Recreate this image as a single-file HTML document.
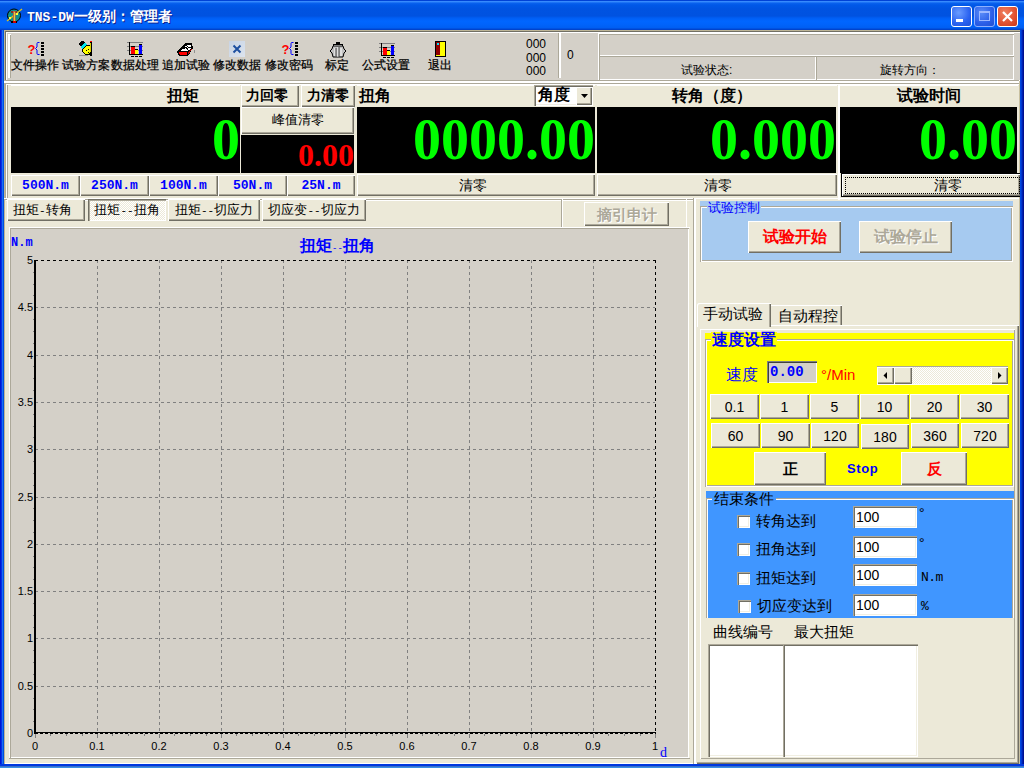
<!DOCTYPE html><html><head><meta charset="utf-8"><style>
*{box-sizing:border-box;margin:0;padding:0}
html,body{width:1024px;height:768px;overflow:hidden;background:#0055e5;font-family:"Liberation Sans",sans-serif;font-size:12px;color:#000}
div,span{position:absolute;white-space:nowrap}
.title{left:0;top:0;width:1024px;height:30px;background:linear-gradient(to bottom,#0042d6 0px,#0042d6 1px,#3d90ff 1px,#2f84fb 2px,#0a62ee 3px,#0058e8 5px,#0053e1 9px,#0052e0 16px,#005ef4 18px,#0066ff 21px,#0064fc 24px,#005ef2 28px,#0046d0 29px,#0040c8 30px)}
.btn{background:#ece9d8;box-shadow:inset 1px 1px 0 #fff,inset -1px -1px 0 #716f64,inset -2px -2px 0 #aca899;text-align:center}
.sunk{box-shadow:inset 1px 1px 0 #aca899,inset 2px 2px 0 #716f64,inset -1px -1px 0 #fff,inset -2px -2px 0 #f1efe2}
.sunk1{box-shadow:inset 1px 1px 0 #aca899,inset -1px -1px 0 #fff}
.rais1{box-shadow:inset 1px 1px 0 #fff,inset -1px -1px 0 #aca899}
.blk{background:#000}
.hdr{background:#ece9d8;box-shadow:inset 0 1px 0 #fff}
.dig{font-family:"Liberation Serif",serif;font-weight:bold;color:#00ff00;text-align:right;font-size:56px;transform:scaleY(1.07);transform-origin:50% 100%}
.cn{font-size:12px}
.hb{font-size:16px;font-weight:bold;line-height:16px}
</style></head><body>
<div class="title"></div>
<div style="left:27px;top:10px;color:#fff;font-weight:bold;font-size:13px;line-height:14px;font-family:Liberation Mono;text-shadow:1px 1px 0 #0a1e8c">TNS-DW<span style="position:static;font-size:14px">一级别：管理者</span></div>
<div style="left:4px;top:30px;width:1016px;height:734px;background:#ece9d8;box-shadow:inset 1px 1px 0 #bdb596,inset -1px 0 0 #c8c0a0,inset 0 -1px 0 #fff"></div>
<div style="left:5px;top:31px;width:1015px;height:50px;background:#d4d0c8;box-shadow:inset 1px 1px 0 #716f64,inset 2px 2px 0 #fff,inset -1px 0 0 #fff,inset -2px 0 0 #aca899"></div>
<div style="left:5px;top:80px;width:1014px;height:1px;background:#aca899"></div>
<div style="left:4px;top:81px;width:1015px;height:2px;background:#fff"></div>
<div style="left:5px;top:83px;width:1014px;height:1px;background:#aca899"></div>
<div style="left:5px;top:83px;width:1px;height:115px;background:#aca899"></div>
<div style="left:6px;top:84px;width:1013px;height:1px;background:#fff"></div>
<div style="left:6px;top:84px;width:1px;height:114px;background:#fff"></div>
<div style="left:7px;top:85px;width:1px;height:113px;background:#aca899"></div>
<div style="left:4px;top:198px;width:1015px;height:1px;background:#fff"></div>
<div style="left:5px;top:199px;width:688px;height:1px;background:#aca899"></div>
<div style="left:6px;top:200px;width:687px;height:1px;background:#fff"></div>
<div style="left:9px;top:227px;width:681px;height:1px;background:#fff"></div>
<div style="left:9px;top:227px;width:1px;height:532px;background:#fff"></div>
<div style="left:9px;top:758px;width:681px;height:1px;background:#aca899"></div>
<div style="left:0;top:30px;width:4px;height:734px;background:linear-gradient(to right,#0018d0 0,#0018d0 1px,#0830e8 1px,#0830e8 2px,#1a70f0 2px,#1a70f0 3px,#0050e0 3px)"></div>
<div style="left:1020px;top:30px;width:4px;height:734px;background:linear-gradient(to right,#0048e0 0,#0048e0 1px,#0038d0 1px,#0038d0 2px,#0020b0 2px,#0020b0 3px,#001090 3px)"></div>
<div style="left:0;top:764px;width:1024px;height:4px;background:linear-gradient(to bottom,#0038e0 0,#0038e0 2px,#3a70c8 2px,#3a70c8 3px,#3890e8 3px)"></div>
<div style="left:8px;top:34px;width:3px;height:44px;box-shadow:inset 2px 1px 0 #fff,inset -1px -1px 0 #aca899"></div>
<div class="cn" style="left:11px;top:58px;line-height:14px;-webkit-text-stroke:0.25px #000">文件操作</div>
<div class="cn" style="left:62px;top:58px;line-height:14px;-webkit-text-stroke:0.25px #000">试验方案</div>
<div class="cn" style="left:111px;top:58px;line-height:14px;-webkit-text-stroke:0.25px #000">数据处理</div>
<div class="cn" style="left:162px;top:58px;line-height:14px;-webkit-text-stroke:0.25px #000">追加试验</div>
<div class="cn" style="left:213px;top:58px;line-height:14px;-webkit-text-stroke:0.25px #000">修改数据</div>
<div class="cn" style="left:265px;top:58px;line-height:14px;-webkit-text-stroke:0.25px #000">修改密码</div>
<div class="cn" style="left:325px;top:58px;line-height:14px;-webkit-text-stroke:0.25px #000">标定</div>
<div class="cn" style="left:362px;top:58px;line-height:14px;-webkit-text-stroke:0.25px #000">公式设置</div>
<div class="cn" style="left:428px;top:58px;line-height:14px;-webkit-text-stroke:0.25px #000">退出</div>
<div style="left:27px;top:41px;width:20px;height:16px"><svg width="20" height="16"><text x="0.5" y="13" font-family="Liberation Sans" font-weight="bold" font-size="13" fill="#ff0000">?</text><path d="M12.5 1.5 h-1.5 q-1 0 -1 1 v3.5 l-1.5 1.5 l1.5 1.5 v3.5 q0 1 1 1 h1.5" stroke="#0000ff" stroke-width="1" fill="none"/><g shape-rendering="crispEdges"><rect x="14" y="1" width="3" height="2" fill="#000"/><rect x="14" y="4" width="3" height="2" fill="#000"/><rect x="14" y="7" width="3" height="2" fill="#000"/><rect x="14" y="10" width="3" height="2" fill="#000"/><rect x="14" y="13" width="3" height="2" fill="#000"/></g></svg></div>
<div style="left:281px;top:41px;width:20px;height:16px"><svg width="20" height="16"><text x="0.5" y="13" font-family="Liberation Sans" font-weight="bold" font-size="13" fill="#ff0000">?</text><path d="M12.5 1.5 h-1.5 q-1 0 -1 1 v3.5 l-1.5 1.5 l1.5 1.5 v3.5 q0 1 1 1 h1.5" stroke="#0000ff" stroke-width="1" fill="none"/><g shape-rendering="crispEdges"><rect x="14" y="1" width="3" height="2" fill="#000"/><rect x="14" y="4" width="3" height="2" fill="#000"/><rect x="14" y="7" width="3" height="2" fill="#000"/><rect x="14" y="10" width="3" height="2" fill="#000"/><rect x="14" y="13" width="3" height="2" fill="#000"/></g></svg></div>
<div style="left:77px;top:40px;width:17px;height:17px"><svg width="17" height="17" shape-rendering="crispEdges"><path d="M2 3 L4 1 L6 1 L9 4 L5 8 L2 5 z" fill="#000"/><path d="M3 7 L8 3 L10 5 L5 9 z" fill="#00e8f0"/><path d="M6 9 L10 5 L14 5 L14 12 L12 15 L8 14 L5 11 z" fill="#ffff00" stroke="#000" stroke-width="1"/><rect x="9" y="10" width="1" height="1" fill="#000"/><rect x="11" y="9" width="1" height="1" fill="#000"/><rect x="11" y="12" width="1" height="1" fill="#000"/><rect x="13" y="1" width="2" height="1" fill="#f00"/><rect x="13" y="2" width="2" height="14" fill="#000"/><rect x="13" y="3" width="1" height="9" fill="#d8d000"/><rect x="2" y="15" width="9" height="1" fill="#909090"/></svg></div>
<div style="left:127px;top:42px;width:17px;height:16px"><svg width="17" height="16"><rect x="0" y="0" width="16" height="1" fill="#808080"/><rect x="0" y="4" width="16" height="1" fill="#808080"/><rect x="0" y="8" width="16" height="1" fill="#808080"/><rect x="2" y="0" width="1" height="13" fill="#000"/><rect x="2" y="12" width="14" height="1" fill="#000"/><rect x="4" y="4" width="4" height="8" fill="#f00"/><rect x="4" y="4" width="4" height="1" fill="#000"/><rect x="8" y="7" width="3" height="5" fill="#ff0"/><rect x="8" y="7" width="3" height="1" fill="#000"/><rect x="12" y="2" width="3" height="10" fill="#00f"/><rect x="12" y="2" width="3" height="1" fill="#000"/><rect x="4" y="14" width="3" height="1" fill="#000"/><rect x="8" y="14" width="3" height="1" fill="#000"/><rect x="12" y="14" width="3" height="1" fill="#000"/></svg></div>
<div style="left:379px;top:43px;width:17px;height:16px"><svg width="17" height="16"><rect x="0" y="0" width="16" height="1" fill="#808080"/><rect x="0" y="4" width="16" height="1" fill="#808080"/><rect x="0" y="8" width="16" height="1" fill="#808080"/><rect x="2" y="0" width="1" height="13" fill="#000"/><rect x="2" y="12" width="14" height="1" fill="#000"/><rect x="4" y="4" width="4" height="8" fill="#f00"/><rect x="4" y="4" width="4" height="1" fill="#000"/><rect x="8" y="7" width="3" height="5" fill="#ff0"/><rect x="8" y="7" width="3" height="1" fill="#000"/><rect x="12" y="2" width="3" height="10" fill="#00f"/><rect x="12" y="2" width="3" height="1" fill="#000"/><rect x="4" y="14" width="3" height="1" fill="#000"/><rect x="8" y="14" width="3" height="1" fill="#000"/><rect x="12" y="14" width="3" height="1" fill="#000"/></svg></div>
<div style="left:176px;top:42px;width:19px;height:16px"><svg width="19" height="16" shape-rendering="crispEdges"><path d="M1 10 L9 1 L16 1 L17 6 L12 14 L3 14 Z" fill="#000"/><path d="M5 9 L9 4 L10 5 L11 3 L15 3 L15 7 L11 9 Z" fill="#fff"/><path d="M7 7 L10 5 L12 8 M10 3 L12 5 L15 5" stroke="#000" stroke-width="1" fill="none"/><path d="M3 10 H11 V13 H4 Z" fill="#ff0000"/><path d="M12 11 L16 6 L16 7.5 L12 12.5 Z" fill="#c00000"/><rect x="18" y="8" width="1" height="3" fill="#909090"/></svg></div>
<div style="left:229px;top:41px;width:16px;height:16px;background:linear-gradient(135deg,#c8d4e4,#dce4ee)"><svg width="16" height="16"><path d="M4.5 4.5 L11.5 11.5 M11.5 4.5 L4.5 11.5" stroke="#1e50a0" stroke-width="2"/></svg></div>
<div style="left:329px;top:42px;width:18px;height:16px"><svg width="18" height="16"><rect x="7" y="0" width="4" height="2" fill="#000"/><rect x="4" y="2" width="10" height="2" fill="#000"/><rect x="5" y="3" width="8" height="1" fill="#fff"/><path d="M4 4 h10 l1 3 l2 2 l-2 2 l-1 4 h-10 l-1-4 l-2-2 l2-2 z" fill="#c0c0c0" stroke="#000" stroke-width="1"/><path d="M6 6 v8 M9 5 v10 M12 6 v8" stroke="#fff" stroke-width="1"/><path d="M7 6 v8 M10 5 v10" stroke="#404040" stroke-width="1"/></svg></div>
<div style="left:435px;top:41px;width:11px;height:16px;background:#000"><div style="left:1px;top:1px;width:9px;height:14px;background:#ffff00"></div><div style="left:1px;top:1px;width:4px;height:13px;background:#900000"></div><div style="left:2px;top:2px;width:2px;height:2px;background:#00e0ff"></div></div>
<div class="cn" style="left:526px;top:38px;line-height:13px;font-size:12px">000</div>
<div class="cn" style="left:526px;top:52px;line-height:13px;font-size:12px">000</div>
<div class="cn" style="left:526px;top:65px;line-height:13px;font-size:12px">000</div>
<div style="left:558px;top:33px;width:3px;height:45px;box-shadow:inset 1px 0 0 #aca899,inset -2px 0 0 #fff"></div>
<div class="cn" style="left:567px;top:49px;line-height:13px">0</div>
<div style="left:598px;top:33px;width:416px;height:47px;box-shadow:inset 1px 1px 0 #fff"></div>
<div class="sunk1" style="left:599px;top:34px;width:415px;height:22px"></div>
<div class="sunk1" style="left:599px;top:56px;width:217px;height:24px"></div>
<div class="sunk1" style="left:816px;top:56px;width:198px;height:24px"></div>
<div class="cn" style="left:681px;top:62px">试验状态:</div>
<div class="cn" style="left:880px;top:62px">旋转方向：</div>
<div style="left:1015px;top:33px;width:5px;height:47px;background:#d4d0c8"></div>
<div class="hdr" style="left:11px;top:85px;width:229px;height:22px"></div>
<div class="hb" style="left:167px;top:88px">扭矩</div>
<div class="btn hb" style="left:241px;top:85px;width:58px;height:22px;line-height:21px;font-size:14px;padding-right:6px">力回零</div>
<div class="btn hb" style="left:301px;top:85px;width:54px;height:22px;line-height:21px;font-size:14px">力清零</div>
<div class="blk" style="left:11px;top:107px;width:229px;height:66px"></div>
<div class="dig" style="left:11px;top:108px;width:229px;line-height:66px;font-size:56px;">0</div>
<div class="btn" style="left:241px;top:107px;width:113px;height:27px;line-height:26px;font-size:13px">峰值清零</div>
<div class="blk" style="left:241px;top:135px;width:113px;height:38px"></div>
<div class="dig" style="left:241px;top:136px;width:113px;line-height:38px;font-size:32px;color:#ff0000;transform:none;">0.00</div>
<div class="btn" style="left:11px;top:175px;width:69px;height:21px;color:#0000ff;font-weight:bold;line-height:22px;font-family:Liberation Mono;font-size:13px">500N.m</div>
<div class="btn" style="left:80px;top:175px;width:69px;height:21px;color:#0000ff;font-weight:bold;line-height:22px;font-family:Liberation Mono;font-size:13px">250N.m</div>
<div class="btn" style="left:149px;top:175px;width:69px;height:21px;color:#0000ff;font-weight:bold;line-height:22px;font-family:Liberation Mono;font-size:13px">100N.m</div>
<div class="btn" style="left:218px;top:175px;width:69px;height:21px;color:#0000ff;font-weight:bold;line-height:22px;font-family:Liberation Mono;font-size:13px">50N.m</div>
<div class="btn" style="left:287px;top:175px;width:68px;height:21px;color:#0000ff;font-weight:bold;line-height:22px;font-family:Liberation Mono;font-size:13px">25N.m</div>
<div class="hdr" style="left:357px;top:85px;width:238px;height:22px"></div>
<div class="hb" style="left:359px;top:88px">扭角</div>
<div class="sunk" style="left:534px;top:85px;width:59px;height:21px;background:#fff"></div>
<div class="hb" style="left:538px;top:87px">角度</div>
<div class="btn" style="left:576px;top:87px;width:16px;height:18px"><svg style="position:absolute;left:5px;top:7px" width="8" height="5"><path d="M0 0 h7 l-3.5 4z" fill="#000"/></svg></div>
<div class="blk" style="left:357px;top:107px;width:238px;height:66px"></div>
<div class="dig" style="left:357px;top:108px;width:238px;line-height:66px;font-size:56px;">0000.00</div>
<div class="btn" style="left:357px;top:174px;width:238px;height:22px;line-height:22px;font-size:14px;padding-right:7px">清零</div>
<div class="hdr" style="left:597px;top:85px;width:240px;height:22px"></div>
<div class="hb" style="left:672px;top:88px">转角（度）</div>
<div class="blk" style="left:597px;top:107px;width:239px;height:66px"></div>
<div class="dig" style="left:597px;top:108px;width:239px;line-height:66px;font-size:56px;">0.000</div>
<div class="btn" style="left:597px;top:174px;width:240px;height:22px;line-height:22px;font-size:14px;padding-left:2px">清零</div>
<div style="left:838px;top:85px;width:2px;height:115px;background:#fff"></div>
<div class="hdr" style="left:840px;top:85px;width:178px;height:22px"></div>
<div class="hb" style="left:897px;top:88px">试验时间</div>
<div class="blk" style="left:840px;top:107px;width:177px;height:66px"></div>
<div class="dig" style="left:840px;top:108px;width:177px;line-height:66px;font-size:56px;">0.00</div>
<div style="left:841px;top:173px;width:179px;height:24px;background:#000"></div>
<div class="btn" style="left:842px;top:174px;width:178px;height:22px;line-height:22px;font-size:14px;padding-left:34px">清零</div>
<div style="left:845px;top:177px;width:175px;height:17px;border:1px dotted #000"></div>
<div class="btn" style="left:7px;top:199px;width:78px;height:22px;line-height:22px;font-size:13px;text-align:left;padding-left:6px;">扭矩<span style="position:static;font-family:Liberation Mono;font-size:11px">-</span>转角</div>
<div class="btn" style="left:168px;top:199px;width:92px;height:22px;line-height:22px;font-size:13px;">扭矩<span style="position:static;font-family:Liberation Mono;font-size:11px">--</span>切应力</div>
<div class="btn" style="left:262px;top:199px;width:104px;height:22px;line-height:22px;font-size:13px;">切应变<span style="position:static;font-family:Liberation Mono;font-size:11px">--</span>切应力</div>
<div style="left:88px;top:199px;width:78px;height:22px;line-height:22px;font-size:13px;text-align:center;background:repeating-conic-gradient(#fff 0 25%,#ece9d8 0 50%) 0 0/2px 2px;box-shadow:inset 1px 1px 0 #716f64,inset 2px 2px 0 #aca899,inset -1px -1px 0 #fff">扭矩<span style="position:static;font-family:Liberation Mono;font-size:11px">--</span>扭角</div>
<div style="left:561px;top:199px;width:2px;height:28px;box-shadow:inset 1px 0 0 #aca899,inset -1px 0 0 #fff"></div>
<div class="btn" style="left:584px;top:202px;width:85px;height:24px;line-height:25px;color:#aca899;font-weight:bold;font-size:15px;text-shadow:1px 1px 0 #fff">摘引申计</div>
<div style="left:686px;top:199px;width:1px;height:29px;background:#fff"></div>
<div style="left:10px;top:228px;width:679px;height:530px;background:#d4d0c8;box-shadow:inset 1px 1px 0 #aca899,inset -1px -1px 0 #fff"></div>
<div style="left:705px;top:333px;width:309px;height:154px;background:#ffff00"></div>
<div style="left:706px;top:491px;width:308px;height:127px;background:#4096ff"></div>
<div style="left:6px;top:7px;width:18px;height:18px"><svg width="18" height="18"><circle cx="8" cy="8.5" r="6.5" fill="#10908c" stroke="#000" stroke-width="1"/><path d="M1 14 L16 2" stroke="#d8c020" stroke-width="1.5"/><rect x="5" y="4" width="6" height="2" fill="#8a3020"/><rect x="7" y="4" width="2.5" height="10" fill="#c06040"/><rect x="8" y="5" width="1" height="9" fill="#e0d040"/><rect x="5" y="14" width="6" height="2" fill="#000"/><rect x="7" y="14" width="3" height="2" fill="#d00000"/><rect x="3" y="10" width="2" height="2" fill="#ffff40"/><rect x="10" y="6" width="2" height="2" fill="#ffff40"/></svg></div>
<div style="left:951px;top:6px;width:21px;height:21px;border-radius:3px;border:1px solid #fff;background:radial-gradient(circle at 35% 30%,#6a9cff,#2a62f0 60%,#1c50d8)"><div style="left:4px;top:12px;width:7px;height:3px;background:#fff"></div></div>
<div style="left:974px;top:6px;width:21px;height:21px;border-radius:3px;border:1px solid #8cb0ff;background:radial-gradient(circle at 35% 30%,#5a8cf8,#2a5ee8 60%,#2050d0)"><div style="left:4px;top:4px;width:11px;height:10px;border:1px solid #9cb8ff;border-top-width:2px"></div></div>
<div style="left:997px;top:6px;width:21px;height:21px;border-radius:3px;border:1px solid #fff;background:radial-gradient(circle at 35% 30%,#f08060,#e05030 60%,#c83818)"><svg style="position:absolute;left:3px;top:3px" width="13" height="13"><path d="M2 2 L11 11 M11 2 L2 11" stroke="#fff" stroke-width="2.2"/></svg></div>
<div style="left:0;top:0;width:1024px;height:768px"><svg width="1024" height="768" shape-rendering="crispEdges"><line x1="97.5" y1="260" x2="97.5" y2="738" stroke="#808080" stroke-dasharray="3 3"/><line x1="159.5" y1="260" x2="159.5" y2="738" stroke="#808080" stroke-dasharray="3 3"/><line x1="221.5" y1="260" x2="221.5" y2="738" stroke="#808080" stroke-dasharray="3 3"/><line x1="283.5" y1="260" x2="283.5" y2="738" stroke="#808080" stroke-dasharray="3 3"/><line x1="345.5" y1="260" x2="345.5" y2="738" stroke="#808080" stroke-dasharray="3 3"/><line x1="407.5" y1="260" x2="407.5" y2="738" stroke="#808080" stroke-dasharray="3 3"/><line x1="469.5" y1="260" x2="469.5" y2="738" stroke="#808080" stroke-dasharray="3 3"/><line x1="531.5" y1="260" x2="531.5" y2="738" stroke="#808080" stroke-dasharray="3 3"/><line x1="593.5" y1="260" x2="593.5" y2="738" stroke="#808080" stroke-dasharray="3 3"/><line x1="35" y1="307.5" x2="655" y2="307.5" stroke="#808080" stroke-dasharray="3 3"/><line x1="35" y1="355.5" x2="655" y2="355.5" stroke="#808080" stroke-dasharray="3 3"/><line x1="35" y1="402.5" x2="655" y2="402.5" stroke="#808080" stroke-dasharray="3 3"/><line x1="35" y1="449.5" x2="655" y2="449.5" stroke="#808080" stroke-dasharray="3 3"/><line x1="35" y1="497.5" x2="655" y2="497.5" stroke="#808080" stroke-dasharray="3 3"/><line x1="35" y1="544.5" x2="655" y2="544.5" stroke="#808080" stroke-dasharray="3 3"/><line x1="35" y1="591.5" x2="655" y2="591.5" stroke="#808080" stroke-dasharray="3 3"/><line x1="35" y1="638.5" x2="655" y2="638.5" stroke="#808080" stroke-dasharray="3 3"/><line x1="35" y1="686.5" x2="655" y2="686.5" stroke="#808080" stroke-dasharray="3 3"/><line x1="35" y1="260.5" x2="656" y2="260.5" stroke="#000" stroke-dasharray="3 3"/><line x1="655.5" y1="260" x2="655.5" y2="738" stroke="#000" stroke-dasharray="3 3"/><rect x="34" y="260" width="2" height="474" fill="#000"/><rect x="34" y="732" width="622" height="1" fill="#000"/><line x1="35" y1="733.5" x2="656" y2="733.5" stroke="#000" stroke-dasharray="3 2"/><rect x="50" y="734" width="1" height="2" fill="#808080"/><rect x="66" y="734" width="1" height="2" fill="#808080"/><rect x="82" y="734" width="1" height="2" fill="#808080"/><rect x="112" y="734" width="1" height="2" fill="#808080"/><rect x="128" y="734" width="1" height="2" fill="#808080"/><rect x="144" y="734" width="1" height="2" fill="#808080"/><rect x="174" y="734" width="1" height="2" fill="#808080"/><rect x="190" y="734" width="1" height="2" fill="#808080"/><rect x="206" y="734" width="1" height="2" fill="#808080"/><rect x="236" y="734" width="1" height="2" fill="#808080"/><rect x="252" y="734" width="1" height="2" fill="#808080"/><rect x="268" y="734" width="1" height="2" fill="#808080"/><rect x="298" y="734" width="1" height="2" fill="#808080"/><rect x="314" y="734" width="1" height="2" fill="#808080"/><rect x="330" y="734" width="1" height="2" fill="#808080"/><rect x="360" y="734" width="1" height="2" fill="#808080"/><rect x="376" y="734" width="1" height="2" fill="#808080"/><rect x="392" y="734" width="1" height="2" fill="#808080"/><rect x="422" y="734" width="1" height="2" fill="#808080"/><rect x="438" y="734" width="1" height="2" fill="#808080"/><rect x="454" y="734" width="1" height="2" fill="#808080"/><rect x="484" y="734" width="1" height="2" fill="#808080"/><rect x="500" y="734" width="1" height="2" fill="#808080"/><rect x="516" y="734" width="1" height="2" fill="#808080"/><rect x="546" y="734" width="1" height="2" fill="#808080"/><rect x="562" y="734" width="1" height="2" fill="#808080"/><rect x="578" y="734" width="1" height="2" fill="#808080"/><rect x="608" y="734" width="1" height="2" fill="#808080"/><rect x="624" y="734" width="1" height="2" fill="#808080"/><rect x="640" y="734" width="1" height="2" fill="#808080"/><rect x="35" y="734" width="1" height="4" fill="#808080"/><rect x="97" y="734" width="1" height="4" fill="#808080"/><rect x="159" y="734" width="1" height="4" fill="#808080"/><rect x="221" y="734" width="1" height="4" fill="#808080"/><rect x="283" y="734" width="1" height="4" fill="#808080"/><rect x="345" y="734" width="1" height="4" fill="#808080"/><rect x="407" y="734" width="1" height="4" fill="#808080"/><rect x="469" y="734" width="1" height="4" fill="#808080"/><rect x="531" y="734" width="1" height="4" fill="#808080"/><rect x="593" y="734" width="1" height="4" fill="#808080"/><rect x="655" y="734" width="1" height="4" fill="#808080"/><rect x="33" y="272" width="1" height="1" fill="#808080"/><rect x="33" y="284" width="1" height="1" fill="#808080"/><rect x="33" y="295" width="1" height="1" fill="#808080"/><rect x="33" y="319" width="1" height="1" fill="#808080"/><rect x="33" y="331" width="1" height="1" fill="#808080"/><rect x="33" y="343" width="1" height="1" fill="#808080"/><rect x="33" y="366" width="1" height="1" fill="#808080"/><rect x="33" y="378" width="1" height="1" fill="#808080"/><rect x="33" y="390" width="1" height="1" fill="#808080"/><rect x="33" y="414" width="1" height="1" fill="#808080"/><rect x="33" y="426" width="1" height="1" fill="#808080"/><rect x="33" y="437" width="1" height="1" fill="#808080"/><rect x="33" y="461" width="1" height="1" fill="#808080"/><rect x="33" y="473" width="1" height="1" fill="#808080"/><rect x="33" y="485" width="1" height="1" fill="#808080"/><rect x="33" y="508" width="1" height="1" fill="#808080"/><rect x="33" y="520" width="1" height="1" fill="#808080"/><rect x="33" y="532" width="1" height="1" fill="#808080"/><rect x="33" y="556" width="1" height="1" fill="#808080"/><rect x="33" y="567" width="1" height="1" fill="#808080"/><rect x="33" y="579" width="1" height="1" fill="#808080"/><rect x="33" y="603" width="1" height="1" fill="#808080"/><rect x="33" y="615" width="1" height="1" fill="#808080"/><rect x="33" y="627" width="1" height="1" fill="#808080"/><rect x="33" y="650" width="1" height="1" fill="#808080"/><rect x="33" y="662" width="1" height="1" fill="#808080"/><rect x="33" y="674" width="1" height="1" fill="#808080"/><rect x="33" y="698" width="1" height="1" fill="#808080"/><rect x="33" y="709" width="1" height="1" fill="#808080"/><rect x="33" y="721" width="1" height="1" fill="#808080"/></svg></div>
<div style="left:0px;top:254px;width:33px;text-align:right;font-size:11px;line-height:12px">5</div>
<div style="left:0px;top:301px;width:33px;text-align:right;font-size:11px;line-height:12px">4.5</div>
<div style="left:0px;top:349px;width:33px;text-align:right;font-size:11px;line-height:12px">4</div>
<div style="left:0px;top:396px;width:33px;text-align:right;font-size:11px;line-height:12px">3.5</div>
<div style="left:0px;top:443px;width:33px;text-align:right;font-size:11px;line-height:12px">3</div>
<div style="left:0px;top:491px;width:33px;text-align:right;font-size:11px;line-height:12px">2.5</div>
<div style="left:0px;top:538px;width:33px;text-align:right;font-size:11px;line-height:12px">2</div>
<div style="left:0px;top:585px;width:33px;text-align:right;font-size:11px;line-height:12px">1.5</div>
<div style="left:0px;top:632px;width:33px;text-align:right;font-size:11px;line-height:12px">1</div>
<div style="left:0px;top:680px;width:33px;text-align:right;font-size:11px;line-height:12px">0.5</div>
<div style="left:0px;top:727px;width:33px;text-align:right;font-size:11px;line-height:12px">0</div>
<div style="left:15px;top:740px;width:40px;text-align:center;font-size:11px;line-height:12px">0</div>
<div style="left:77px;top:740px;width:40px;text-align:center;font-size:11px;line-height:12px">0.1</div>
<div style="left:139px;top:740px;width:40px;text-align:center;font-size:11px;line-height:12px">0.2</div>
<div style="left:201px;top:740px;width:40px;text-align:center;font-size:11px;line-height:12px">0.3</div>
<div style="left:263px;top:740px;width:40px;text-align:center;font-size:11px;line-height:12px">0.4</div>
<div style="left:325px;top:740px;width:40px;text-align:center;font-size:11px;line-height:12px">0.5</div>
<div style="left:387px;top:740px;width:40px;text-align:center;font-size:11px;line-height:12px">0.6</div>
<div style="left:449px;top:740px;width:40px;text-align:center;font-size:11px;line-height:12px">0.7</div>
<div style="left:511px;top:740px;width:40px;text-align:center;font-size:11px;line-height:12px">0.8</div>
<div style="left:573px;top:740px;width:40px;text-align:center;font-size:11px;line-height:12px">0.9</div>
<div style="left:635px;top:740px;width:40px;text-align:center;font-size:11px;line-height:12px">1</div>
<div style="left:11px;top:237px;color:#0000ff;font-family:Liberation Mono;font-weight:bold;font-size:12px;line-height:12px">N.m</div>
<div style="left:660px;top:746px;color:#0000ff;font-family:Liberation Serif;font-size:14px;line-height:14px">d</div>
<div style="left:300px;top:238px;color:#0000ff;font-weight:bold;font-size:16px;line-height:16px">扭矩<span style="position:static;font-family:Liberation Mono;font-size:9px;font-weight:normal">--</span>扭角</div>
<div style="left:693px;top:198px;width:1px;height:566px;background:#aca899"></div>
<div style="left:694px;top:198px;width:2px;height:566px;background:#fff"></div>
<div style="left:700px;top:201px;width:313px;height:61px;background:#a6caf0"></div>
<div style="left:700px;top:206px;width:313px;height:56px;box-shadow:inset 1px 1px 0 #aca899,inset 2px 2px 0 #fff,inset -1px -1px 0 #fff,inset -2px -2px 0 #aca899"></div>
<div style="left:707px;top:201px;height:13px;padding:0 1px;background:#a6caf0;color:#0000ff;font-size:13px;line-height:13px">试验控制</div>
<div class="btn" style="left:748px;top:221px;width:93px;height:32px;line-height:32px;color:#ff0000;font-weight:bold;font-size:16px">试验开始</div>
<div class="btn" style="left:859px;top:221px;width:93px;height:32px;line-height:32px;color:#aca899;font-weight:bold;font-size:16px;text-shadow:1px 1px 0 #fff">试验停止</div>
<div style="left:697px;top:325px;width:322px;height:439px;box-shadow:inset 0 1px 0 #fff,inset -1px -1px 0 #716f64,inset -2px -2px 0 #aca899"></div>
<div style="left:700px;top:329px;width:315px;height:430px;box-shadow:inset 1px 1px 0 #fff,inset -1px -1px 0 #aca899"></div>
<div style="left:697px;top:303px;width:74px;height:24px;background:#ece9d8;box-shadow:inset 1px 1px 0 #fff,inset -1px 0 0 #716f64,inset -2px 0 0 #aca899;border-top-left-radius:2px"></div>
<div style="left:703px;top:305px;font-size:15px;line-height:17px">手动试验</div>
<div style="left:771px;top:305px;width:71px;height:20px;box-shadow:inset 0 1px 0 #fff,inset -1px 0 0 #716f64,inset -2px 0 0 #aca899"></div>
<div style="left:778px;top:307px;font-size:15px;line-height:17px">自动程控</div>
<div style="left:705px;top:339px;width:309px;height:148px;box-shadow:inset 1px 1px 0 #aca899,inset 2px 2px 0 #fff,inset -1px -1px 0 #fff,inset -2px -2px 0 #aca899"></div>
<div style="left:711px;top:332px;padding:0 1px;background:#ffff00;color:#0000ff;font-weight:bold;font-size:16px;line-height:16px">速度设置</div>
<div style="left:726px;top:366px;color:#0000ff;font-size:16px;line-height:17px">速度</div>
<div class="sunk1" style="left:767px;top:361px;width:50px;height:22px;background:#d4d0c8;box-shadow:inset 1px 1px 0 #808080,inset 2px 2px 0 #404040,inset -1px -1px 0 #fff"></div>
<div style="left:770px;top:364px;color:#0000ff;font-family:Liberation Mono;font-weight:bold;font-size:14px;line-height:16px">0.00</div>
<div style="left:821px;top:366px;color:#ff0000;font-size:15px;line-height:17px">°/Min</div>
<div style="left:877px;top:366px;width:131px;height:19px;background:#fff;box-shadow:inset 0 1px 0 #aca899"></div>
<div style="left:877px;top:367px;width:131px;height:17px;background:repeating-conic-gradient(#fff 0 25%,#ece9d8 0 50%) 0 0/2px 2px"></div>
<div class="btn" style="left:877px;top:367px;width:17px;height:17px"><svg style="position:absolute;left:6px;top:5px" width="5" height="8"><path d="M4 0 v7 l-3.5-3.5z" fill="#000"/></svg></div>
<div class="btn" style="left:894px;top:367px;width:18px;height:17px"></div>
<div class="btn" style="left:991px;top:367px;width:17px;height:17px"><svg style="position:absolute;left:7px;top:5px" width="5" height="8"><path d="M0 0 v7 l3.5-3.5z" fill="#000"/></svg></div>
<div class="btn" style="left:710px;top:394px;width:49px;height:25px;line-height:27px;font-size:14px">0.1</div>
<div class="btn" style="left:760px;top:394px;width:49px;height:25px;line-height:27px;font-size:14px">1</div>
<div class="btn" style="left:810px;top:394px;width:49px;height:25px;line-height:27px;font-size:14px">5</div>
<div class="btn" style="left:860px;top:394px;width:49px;height:25px;line-height:27px;font-size:14px">10</div>
<div class="btn" style="left:910px;top:394px;width:49px;height:25px;line-height:27px;font-size:14px">20</div>
<div class="btn" style="left:960px;top:394px;width:49px;height:25px;line-height:27px;font-size:14px">30</div>
<div class="btn" style="left:711px;top:423px;width:49px;height:25px;line-height:27px;font-size:14px">60</div>
<div class="btn" style="left:761px;top:423px;width:49px;height:25px;line-height:27px;font-size:14px">90</div>
<div class="btn" style="left:811px;top:423px;width:48px;height:25px;line-height:27px;font-size:14px">120</div>
<div class="btn" style="left:861px;top:424px;width:48px;height:25px;line-height:27px;font-size:14px">180</div>
<div class="btn" style="left:911px;top:423px;width:48px;height:25px;line-height:27px;font-size:14px">360</div>
<div class="btn" style="left:961px;top:423px;width:48px;height:25px;line-height:27px;font-size:14px">720</div>
<div class="btn" style="left:754px;top:452px;width:72px;height:33px;line-height:33px;font-weight:bold;font-size:15px">正</div>
<div style="left:847px;top:461px;color:#0000ff;font-weight:bold;font-size:13px;line-height:15px;letter-spacing:0.6px">Stop</div>
<div class="btn" style="left:901px;top:452px;width:66px;height:33px;line-height:33px;font-weight:bold;font-size:15px;color:#ff0000">反</div>
<div style="left:706px;top:498px;width:308px;height:120px;overflow:hidden"><div style="left:0;top:0;width:308px;height:140px;box-shadow:inset 1px 1px 0 #aca899,inset 2px 2px 0 #fff,inset -1px -1px 0 #fff,inset -2px -2px 0 #aca899"></div></div>
<div style="left:712px;top:491px;padding:0 2px;background:#4096ff;font-size:15px;line-height:15px">结束条件</div>
<div style="left:737px;top:515px;width:13px;height:13px;background:#fff;box-shadow:inset 1px 1px 0 #aca899,inset 2px 2px 0 #716f64,inset -1px -1px 0 #fff,inset -2px -2px 0 #f1efe2"></div>
<div style="left:756px;top:512px;font-size:15px;line-height:17px">转角达到</div>
<div style="left:853px;top:506px;width:64px;height:22px;background:#fff;box-shadow:inset 1px 1px 0 #aca899,inset 2px 2px 0 #716f64,inset -1px -1px 0 #fff,inset -2px -2px 0 #f1efe2"></div>
<div style="left:856px;top:510px;font-size:14px;line-height:15px">100</div>
<div style="left:919px;top:506px;font-size:14px;line-height:14px">°</div>
<div style="left:737px;top:543px;width:13px;height:13px;background:#fff;box-shadow:inset 1px 1px 0 #aca899,inset 2px 2px 0 #716f64,inset -1px -1px 0 #fff,inset -2px -2px 0 #f1efe2"></div>
<div style="left:756px;top:540px;font-size:15px;line-height:17px">扭角达到</div>
<div style="left:853px;top:536px;width:64px;height:22px;background:#fff;box-shadow:inset 1px 1px 0 #aca899,inset 2px 2px 0 #716f64,inset -1px -1px 0 #fff,inset -2px -2px 0 #f1efe2"></div>
<div style="left:856px;top:540px;font-size:14px;line-height:15px">100</div>
<div style="left:919px;top:536px;font-size:14px;line-height:14px">°</div>
<div style="left:737px;top:572px;width:13px;height:13px;background:#fff;box-shadow:inset 1px 1px 0 #aca899,inset 2px 2px 0 #716f64,inset -1px -1px 0 #fff,inset -2px -2px 0 #f1efe2"></div>
<div style="left:756px;top:569px;font-size:15px;line-height:17px">扭矩达到</div>
<div style="left:853px;top:564px;width:64px;height:22px;background:#fff;box-shadow:inset 1px 1px 0 #aca899,inset 2px 2px 0 #716f64,inset -1px -1px 0 #fff,inset -2px -2px 0 #f1efe2"></div>
<div style="left:856px;top:568px;font-size:14px;line-height:15px">100</div>
<div style="left:921px;top:571px;font-family:Liberation Mono;font-size:13px;line-height:13px;letter-spacing:-0.5px">N.m</div>
<div style="left:738px;top:600px;width:13px;height:13px;background:#fff;box-shadow:inset 1px 1px 0 #aca899,inset 2px 2px 0 #716f64,inset -1px -1px 0 #fff,inset -2px -2px 0 #f1efe2"></div>
<div style="left:757px;top:597px;font-size:15px;line-height:17px">切应变达到</div>
<div style="left:853px;top:594px;width:64px;height:22px;background:#fff;box-shadow:inset 1px 1px 0 #aca899,inset 2px 2px 0 #716f64,inset -1px -1px 0 #fff,inset -2px -2px 0 #f1efe2"></div>
<div style="left:856px;top:598px;font-size:14px;line-height:15px">100</div>
<div style="left:921px;top:600px;font-family:Liberation Mono;font-size:13px;line-height:14px">%</div>
<div style="left:713px;top:624px;font-size:15px;line-height:16px">曲线编号</div>
<div style="left:794px;top:624px;font-size:15px;line-height:16px">最大扭矩</div>
<div style="left:708px;top:644px;width:77px;height:113px;background:#fff;box-shadow:inset 1px 1px 0 #aca899,inset 2px 2px 0 #716f64,inset -1px -1px 0 #fff,inset -2px -2px 0 #f1efe2"></div>
<div style="left:783px;top:644px;width:135px;height:113px;background:#fff;box-shadow:inset 1px 1px 0 #aca899,inset 2px 2px 0 #716f64,inset -1px -1px 0 #fff,inset -2px -2px 0 #f1efe2"></div>
</body></html>
